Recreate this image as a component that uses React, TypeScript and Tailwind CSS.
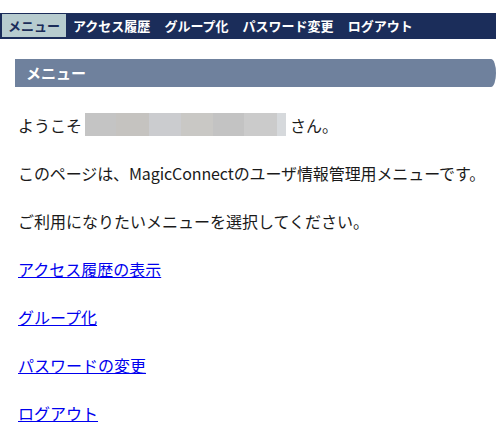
import React from "react";

const navItems = ["アクセス履歴", "グループ化", "パスワード変更", "ログアウト"];
const links = ["アクセス履歴の表示", "グループ化", "パスワードの変更", "ログアウト"];
const blur = ["#c4c4c4", "#c5c3c0", "#cbcccf", "#c9c8c5", "#c3c3c3", "#cbcbcb", "#d6d9dc"];
const blurW = [31, 33, 32, 32, 31, 33, 9];

export default function App() {
  return (
    <div
      className="min-h-[433px] bg-white pt-[13px] text-[#222]"
      style={{ fontFamily: '"Noto Sans CJK JP", "Noto Sans", sans-serif' }}
    >
      <nav className="flex h-[26px] items-start bg-[#1b2d5a] pl-[2px] pt-[1px]">
        <span className="h-[23px] bg-[#b7cccf] px-[6px] text-[13px] font-bold leading-[23px] text-[#1b2d5a]">
          メニュー
        </span>
        {navItems.map((t) => (
          <span key={t} className="h-[23px] px-[7px] text-[13px] font-bold leading-[23px] text-white">
            {t}
          </span>
        ))}
      </nav>
      <div className="ml-[15px] mt-[20px] h-[28px] rounded-tr-[5px_14px] rounded-br-[5px_14px] bg-[#6f819d] pl-[11px] text-[15px] font-bold leading-[28px] text-white">
        メニュー
      </div>
      <div className="mt-[26px] flex flex-col gap-[26px] whitespace-nowrap pl-[18px] text-[16px] leading-[22px] text-[#1a1a1a]">
        <p className="flex items-center">
          <span>ようこそ</span>
          <span className="ml-[3px] mr-[4px] flex h-[23px]">
            {blur.map((c, i) => (
              <span key={i} className="h-full" style={{ backgroundColor: c, width: blurW[i] }} />
            ))}
          </span>
          <span>さん。</span>
        </p>
        <p className="tracking-[-0.1px]">このページは、MagicConnectのユーザ情報管理用メニューです。</p>
        <p>ご利用になりたいメニューを選択してください。</p>
        <div className="flex flex-col gap-[26px]">
          {links.map((l) => (
            <a key={l} href="#" className="w-fit text-[#0000ee] underline">
              {l}
            </a>
          ))}
        </div>
      </div>
    </div>
  );
}
